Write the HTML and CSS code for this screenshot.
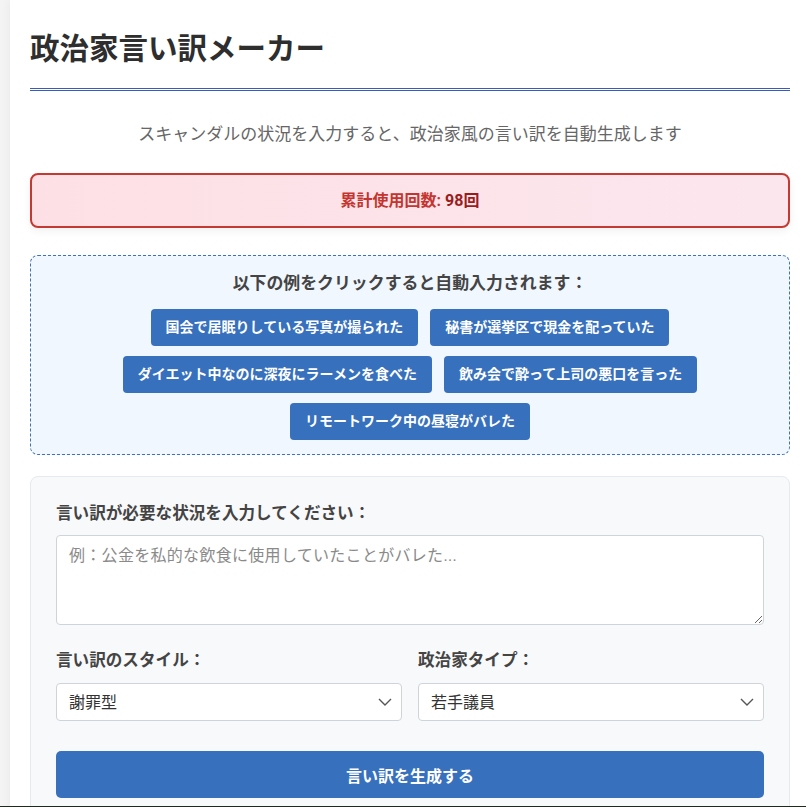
FILE: index.html
```html
<!DOCTYPE html>
<html lang="ja">
<head>
<meta charset="utf-8">
<title>政治家言い訳メーカー</title>
<link rel="stylesheet" href="styles.css">
</head>
<body>
<div class="page">
  <h1 class="title">政治家言い訳メーカー</h1>
  <p class="subtitle">スキャンダルの状況を入力すると、政治家風の言い訳を自動生成します</p>

  <div class="stats">累計使用回数: <span class="count">98回</span></div>

  <div class="examples">
    <div class="examples-title">以下の例をクリックすると自動入力されます：</div>
    <div class="example-list">
      <button class="example">国会で居眠りしている写真が撮られた</button>
      <button class="example">秘書が選挙区で現金を配っていた</button>
      <button class="example">ダイエット中なのに深夜にラーメンを食べた</button>
      <button class="example">飲み会で酔って上司の悪口を言った</button>
      <button class="example">リモートワーク中の昼寝がバレた</button>
    </div>
  </div>

  <div class="form">
    <label class="label">言い訳が必要な状況を入力してください：</label>
    <textarea class="situation" placeholder="例：公金を私的な飲食に使用していたことがバレた..."></textarea>

    <div class="row">
      <div class="field">
        <label class="label">言い訳のスタイル：</label>
        <div class="select-wrap">
          <select class="select"><option>謝罪型</option></select>
          <svg class="chev" width="14" height="8" viewBox="0 0 14 8"><path d="M1 1l6 6 6-6" fill="none" stroke="#555" stroke-width="1.4"/></svg>
        </div>
      </div>
      <div class="field">
        <label class="label">政治家タイプ：</label>
        <div class="select-wrap">
          <select class="select"><option>若手議員</option></select>
          <svg class="chev" width="14" height="8" viewBox="0 0 14 8"><path d="M1 1l6 6 6-6" fill="none" stroke="#555" stroke-width="1.4"/></svg>
        </div>
      </div>
    </div>

    <button class="generate">言い訳を生成する</button>
  </div>
</div>
<div class="edge"></div>
</body>
</html>
```

FILE: styles.css
```css
html, body {
  margin: 0;
  padding: 0;
}
body {
  background: #f4f4f4;
  font-family: Roboto, "Noto Sans CJK JP", sans-serif;
  color: #333;
  overflow: hidden;
}
.page {
  margin-left: 10px;
  background: #fff;
  box-shadow: 0 0 10px rgba(0,0,0,0.06);
  padding: 31px 16px 40px 20px;
  min-height: 900px;
}
.title {
  margin: 0;
  font-size: 29.5px;
  line-height: 36px;
  font-weight: 700;
  color: #2e2e2e;
  padding-bottom: 21px;
  border-bottom: 3px double #3b5cb4;
}
.subtitle {
  margin: 30px 0 0;
  text-align: center;
  font-size: 17px;
  line-height: 26px;
  color: #666;
}
.stats {
  margin-top: 26px;
  border: 2px solid #c43a32;
  border-radius: 8px;
  background: linear-gradient(90deg, #fde0e5, #fce6ee);
  box-shadow: 0 3px 8px rgba(0,0,0,0.06);
  padding: 14px;
  text-align: center;
  font-size: 16px;
  line-height: 23px;
  font-weight: 700;
  color: #c4352f;
}
.count {
  color: #9b1c1c;
}
.examples {
  margin-top: 27px;
  border: 1px dashed #3d72b8;
  border-radius: 8px;
  background: #f0f7ff;
  padding: 15px 15px 14px;
  text-align: center;
}
.examples-title {
  font-size: 16.9px;
  line-height: 24px;
  font-weight: 700;
  color: #444;
  margin-bottom: 14px;
}
.example-list {
  display: flex;
  flex-wrap: wrap;
  justify-content: center;
  gap: 10px 12px;
}
.example {
  border: none;
  border-radius: 4px;
  background: #3770bd;
  color: #fff;
  font-family: Roboto, "Noto Sans CJK JP", sans-serif;
  font-size: 14px;
  line-height: 21px;
  font-weight: 700;
  padding: 8px 15px;
  cursor: pointer;
}
.form {
  margin-top: 21px;
  background: #f8f9fa;
  border: 1px solid #e6e9ed;
  border-radius: 8px;
  padding: 25px 25px 40px;
}
.label {
  display: block;
  font-size: 16.6px;
  line-height: 24px;
  font-weight: 700;
  color: #444;
  margin-bottom: 9px;
}
.situation {
  display: block;
  box-sizing: border-box;
  width: 100%;
  height: 90px;
  border: 1px solid #ced4da;
  border-radius: 4px;
  background: #fff;
  padding: 8px 12px;
  font-family: Roboto, "Noto Sans CJK JP", sans-serif;
  font-size: 16px;
  line-height: 24px;
  letter-spacing: 0.3px;
  color: #333;
  resize: vertical;
}
.situation::placeholder {
  color: #8a8a8a;
}
.row {
  margin-top: 24px;
  display: grid;
  grid-template-columns: 1fr 1fr;
  gap: 16px;
}
.row .label {
  margin-bottom: 10px;
}
.select-wrap {
  position: relative;
}
.select {
  display: block;
  box-sizing: border-box;
  width: 100%;
  height: 38px;
  border: 1px solid #ced4da;
  border-radius: 4px;
  background: #fff;
  padding: 0 12px;
  font-family: Roboto, "Noto Sans CJK JP", sans-serif;
  font-size: 16px;
  color: #333;
  -webkit-appearance: none;
  appearance: none;
}
.chev {
  position: absolute;
  right: 10px;
  top: 15px;
  pointer-events: none;
}
.generate {
  display: block;
  width: 100%;
  margin-top: 30px;
  height: 47px;
  border: none;
  border-radius: 5px;
  background: #3770bd;
  color: #fff;
  font-family: Roboto, "Noto Sans CJK JP", sans-serif;
  font-size: 16px;
  font-weight: 700;
  cursor: pointer;
}
.edge {
  position: fixed;
  left: 0;
  right: 0;
  bottom: 0;
  height: 1px;
  background: #1d2a1d;
}
```
